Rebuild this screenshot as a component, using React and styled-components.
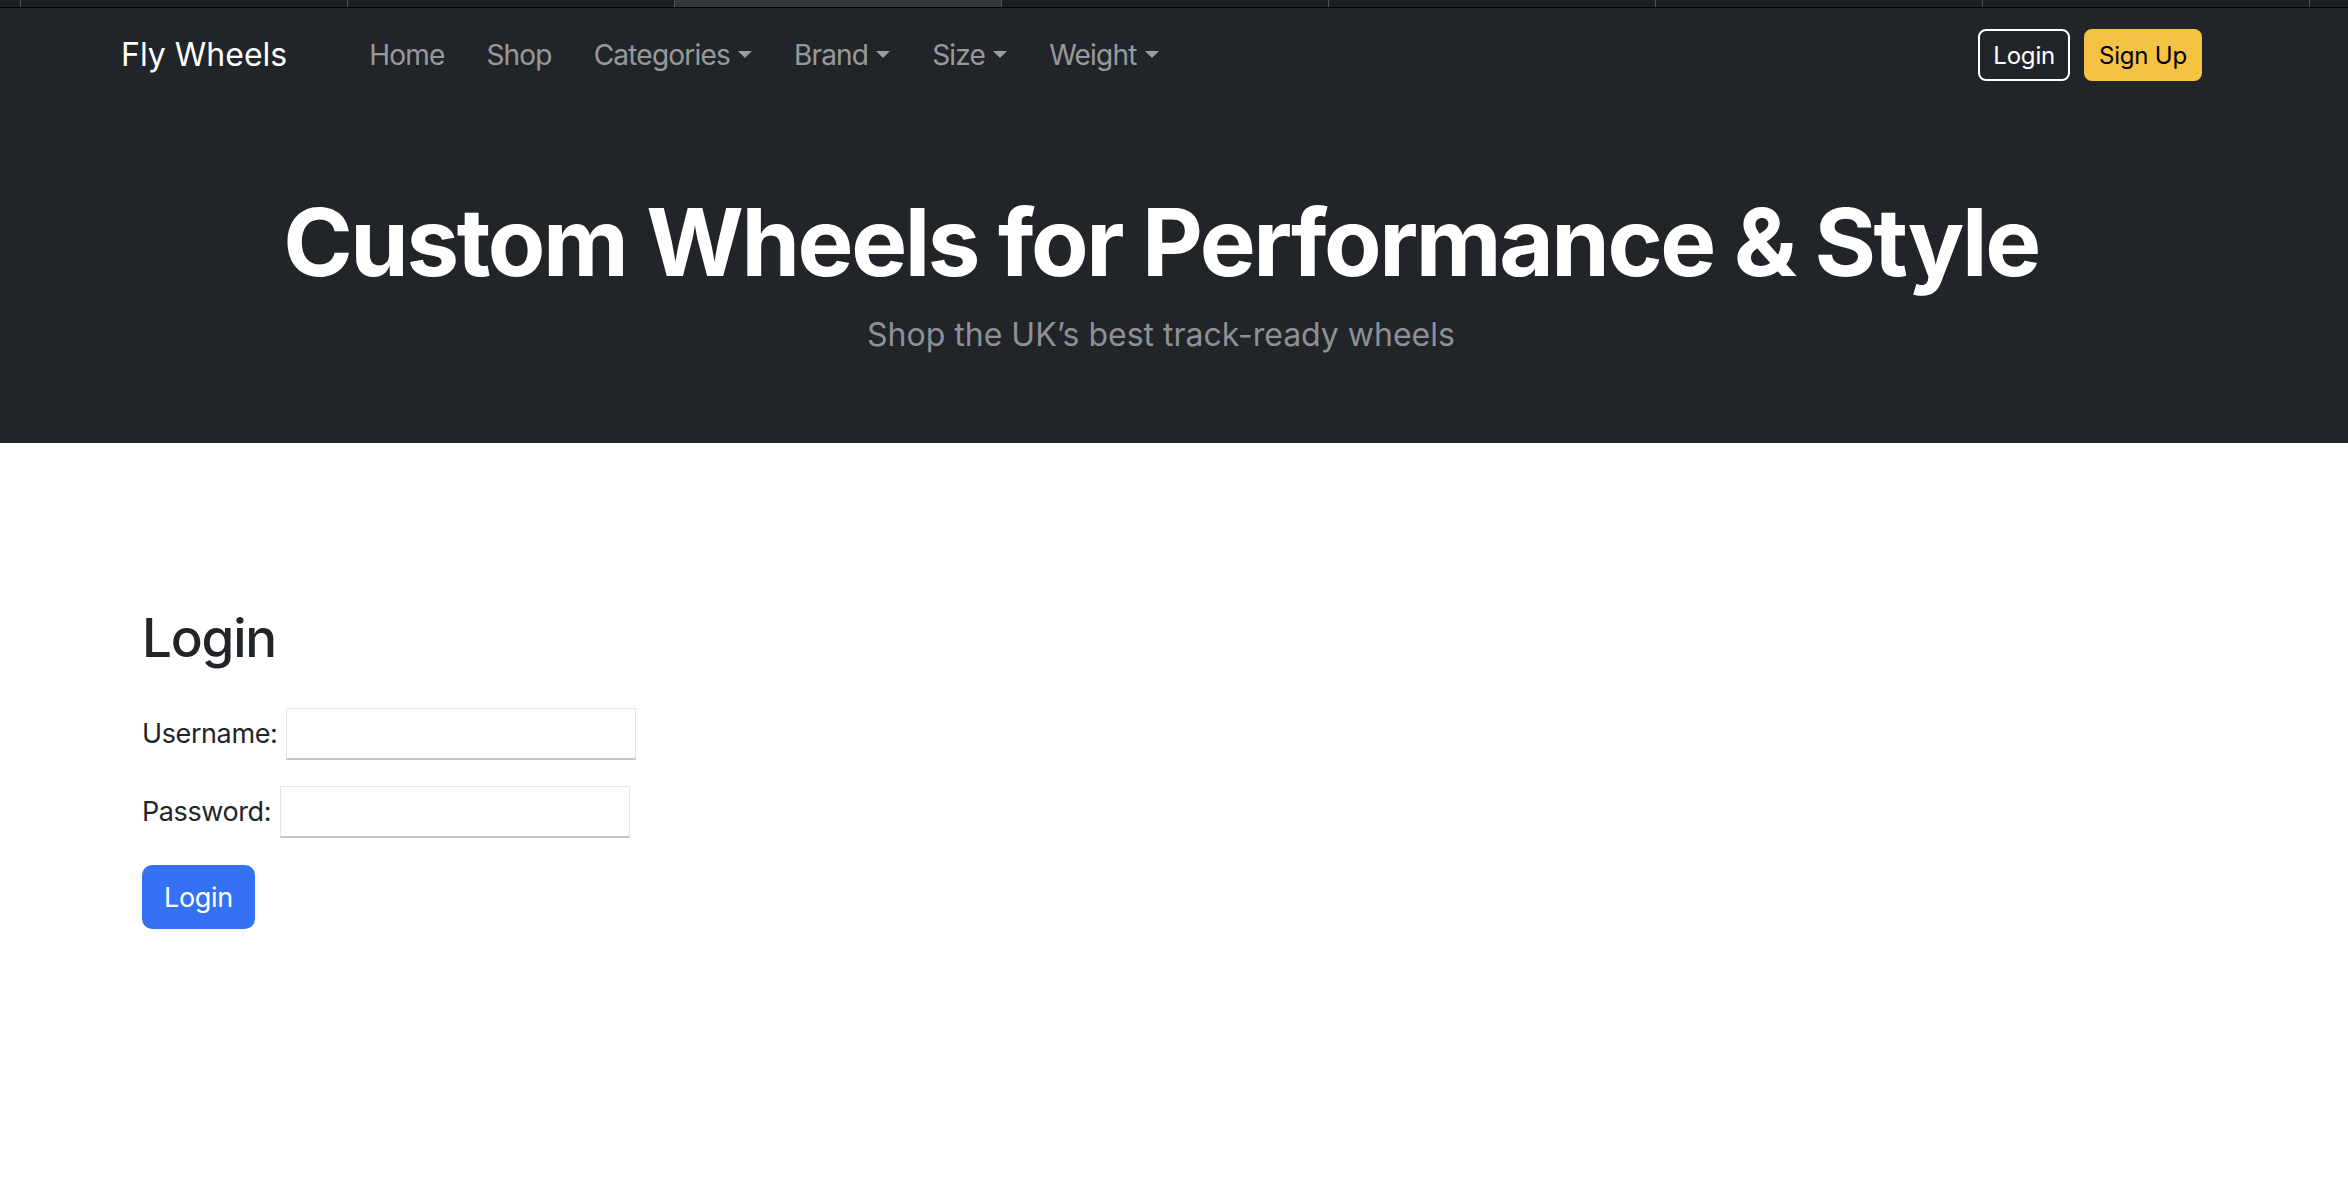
import React from "react";
import styled, { createGlobalStyle } from "styled-components";

const Global = createGlobalStyle`
  html, body { margin: 0; padding: 0; background: #fff; }
  body {
    font-family: Inter, "Liberation Sans", Arial, sans-serif;
    color: #212529;
    -webkit-font-smoothing: antialiased;
  }
  * { box-sizing: border-box; }
`;

const TabStrip = styled.div`
  display: flex;
  height: 8px;
  background: #1e1e1e;
  border-bottom: 1px solid #000;
  padding-left: 20px;
  overflow: hidden;
`;

const Tab = styled.div`
  flex: 0 0 327px;
  border-left: 1px solid #4f4f4f;
  background: ${(p) => (p.$active ? "#363636" : "transparent")};
`;

const Navbar = styled.nav`
  background: #212529;
  height: 94px;
  display: flex;
  align-items: center;
  padding: 0 146px 0 121px;
`;

const Brand = styled.a`
  font-size: 32px;
  line-height: 1.5;
  color: #fff;
  text-decoration: none;
  margin-right: 61px;
`;

const NavList = styled.ul`
  display: flex;
  list-style: none;
  margin: 0;
  padding: 0;
  flex: 1;
`;

const NavLink = styled.a`
  display: flex;
  align-items: center;
  padding: 0 21px;
  font-size: 28px;
  letter-spacing: -0.8px;
  line-height: 42px;
  color: rgba(255, 255, 255, 0.55);
  text-decoration: none;
`;

const Caret = styled.span`
  display: inline-block;
  margin-left: 8px;
  width: 0;
  height: 0;
  border-left: 7px solid transparent;
  border-right: 7px solid transparent;
  border-top: 7px solid currentColor;
  transform: translateY(-1px);
`;

const Actions = styled.div`
  display: flex;
  gap: 14px;
`;

const NavButton = styled.button`
  height: 52px;
  padding: 0 13px;
  font-family: inherit;
  font-size: 24px;
  letter-spacing: -0.2px;
  border-radius: 8px;
  border: 2px solid ${(p) => (p.$warning ? "#f4c344" : "#fff")};
  background: ${(p) => (p.$warning ? "#f4c344" : "transparent")};
  color: ${(p) => (p.$warning ? "#000" : "#fff")};
`;

const Hero = styled.header`
  background: #212529;
  padding: 84px 26px 84px 0;
  text-align: center;
`;

const HeroTitle = styled.h1`
  margin: 0;
  font-size: 94px;
  font-weight: 700;
  letter-spacing: -2.4px;
  line-height: 1.2;
  color: #fff;
`;

const HeroLead = styled.p`
  margin: 12px 0 0;
  font-size: 32px;
  line-height: 1.5;
  color: #8e9093;
`;

const Main = styled.main`
  padding: 164px 0 0 142px;
`;

const Title = styled.h2`
  margin: 0 0 38px;
  font-size: 53px;
  font-weight: 500;
  letter-spacing: -1.2px;
  line-height: 1.2;
`;

const Form = styled.form`
  display: flex;
  flex-direction: column;
  align-items: flex-start;
  gap: 26px;
`;

const Field = styled.div`
  display: flex;
  align-items: center;
  gap: 9px;
`;

const Label = styled.label`
  font-size: 27px;
  letter-spacing: -0.4px;
  line-height: 1.5;
`;

const Input = styled.input`
  width: 350px;
  height: 52px;
  border: 1px solid #e6e6e6;
  border-bottom: 2px solid #c6c6c6;
  background: #fff;
  padding: 0 8px;
  font-size: 24px;
  font-family: inherit;
  outline: none;
`;

const Submit = styled.button`
  margin-top: 1px;
  height: 64px;
  padding: 0 22px;
  background: #3571f3;
  color: #fff;
  border: none;
  border-radius: 10px;
  font-family: inherit;
  font-size: 27px;
  letter-spacing: -0.3px;
`;

const navItems = [
  { label: "Home" },
  { label: "Shop" },
  { label: "Categories", dropdown: true },
  { label: "Brand", dropdown: true },
  { label: "Size", dropdown: true },
  { label: "Weight", dropdown: true },
];

export default function App() {
  return (
    <>
      <Global />
      <TabStrip>
        {Array.from({ length: 8 }).map((_, i) => (
          <Tab key={i} $active={i === 2} />
        ))}
      </TabStrip>
      <Navbar>
        <Brand href="#">Fly Wheels</Brand>
        <NavList>
          {navItems.map((item) => (
            <li key={item.label}>
              <NavLink href="#">
                {item.label}
                {item.dropdown && <Caret />}
              </NavLink>
            </li>
          ))}
        </NavList>
        <Actions>
          <NavButton type="button">Login</NavButton>
          <NavButton type="button" $warning>
            Sign Up
          </NavButton>
        </Actions>
      </Navbar>
      <Hero>
        <HeroTitle>Custom Wheels for Performance &amp; Style</HeroTitle>
        <HeroLead>Shop the UK’s best track-ready wheels</HeroLead>
      </Hero>
      <Main>
        <Title>Login</Title>
        <Form onSubmit={(e) => e.preventDefault()}>
          <Field>
            <Label htmlFor="username">Username:</Label>
            <Input id="username" type="text" />
          </Field>
          <Field>
            <Label htmlFor="password">Password:</Label>
            <Input id="password" type="password" />
          </Field>
          <Submit type="submit">Login</Submit>
        </Form>
      </Main>
    </>
  );
}
